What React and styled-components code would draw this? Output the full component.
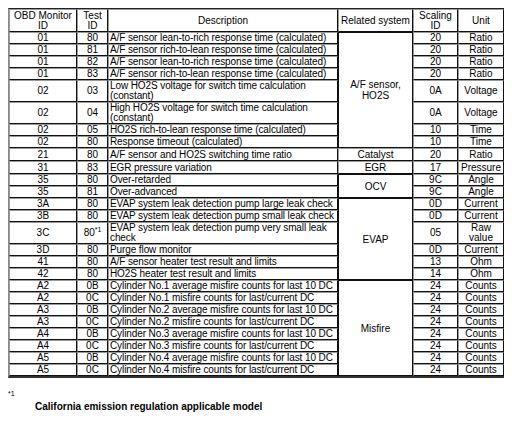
import styled, { createGlobalStyle } from 'styled-components';

const GlobalStyle = createGlobalStyle`
  body {
    margin: 8px;
    background: #fff;
    color: #000;
    font-family: 'Liberation Sans', Arial, sans-serif;
  }
`;

const rows = [
  { mon: '01', test: '80', desc: 'A/F sensor lean-to-rich response time (calculated)', sys: 'A/F sensor,\nHO2S', span: 8, scale: '20', unit: 'Ratio' },
  { mon: '01', test: '81', desc: 'A/F sensor rich-to-lean response time (calculated)', scale: '20', unit: 'Ratio' },
  { mon: '01', test: '82', desc: 'A/F sensor lean-to-rich response time (calculated)', scale: '20', unit: 'Ratio' },
  { mon: '01', test: '83', desc: 'A/F sensor rich-to-lean response time (calculated)', scale: '20', unit: 'Ratio' },
  { mon: '02', test: '03', desc: 'Low HO2S voltage for switch time calculation\n(constant)', scale: '0A', unit: 'Voltage' },
  { mon: '02', test: '04', desc: 'High HO2S voltage for switch time calculation\n(constant)', scale: '0A', unit: 'Voltage' },
  { mon: '02', test: '05', desc: 'HO2S rich-to-lean response time (calculated)', scale: '10', unit: 'Time' },
  { mon: '02', test: '80', desc: 'Response timeout (calculated)', scale: '10', unit: 'Time' },
  { mon: '21', test: '80', desc: 'A/F sensor and HO2S switching time ratio', sys: 'Catalyst', span: 1, scale: '20', unit: 'Ratio' },
  { mon: '31', test: '83', desc: 'EGR pressure variation', sys: 'EGR', span: 1, scale: '17', unit: 'Pressure' },
  { mon: '35', test: '80', desc: 'Over-retarded', sys: 'OCV', span: 2, scale: '9C', unit: 'Angle' },
  { mon: '35', test: '81', desc: 'Over-advanced', scale: '9C', unit: 'Angle' },
  { mon: '3A', test: '80', desc: 'EVAP system leak detection pump large leak check', sys: 'EVAP', span: 6, scale: '0D', unit: 'Current' },
  { mon: '3B', test: '80', desc: 'EVAP system leak detection pump small leak check', scale: '0D', unit: 'Current' },
  { mon: '3C', test: '80', note: '*1', desc: 'EVAP system leak detection pump very small leak\ncheck', scale: '05', unit: 'Raw\nvalue' },
  { mon: '3D', test: '80', desc: 'Purge flow monitor', scale: '0D', unit: 'Current' },
  { mon: '41', test: '80', desc: 'A/F sensor heater test result and limits', scale: '13', unit: 'Ohm' },
  { mon: '42', test: '80', desc: 'HO2S heater test result and limits', scale: '14', unit: 'Ohm' },
  { mon: 'A2', test: '0B', desc: 'Cylinder No.1 average misfire counts for last 10 DC', sys: 'Misfire', span: 8, scale: '24', unit: 'Counts' },
  { mon: 'A2', test: '0C', desc: 'Cylinder No.1 misfire counts for last/current DC', scale: '24', unit: 'Counts' },
  { mon: 'A3', test: '0B', desc: 'Cylinder No.2 average misfire counts for last 10 DC', scale: '24', unit: 'Counts' },
  { mon: 'A3', test: '0C', desc: 'Cylinder No.2 misfire counts for last/current DC', scale: '24', unit: 'Counts' },
  { mon: 'A4', test: '0B', desc: 'Cylinder No.3 average misfire counts for last 10 DC', scale: '24', unit: 'Counts' },
  { mon: 'A4', test: '0C', desc: 'Cylinder No.3 misfire counts for last/current DC', scale: '24', unit: 'Counts' },
  { mon: 'A5', test: '0B', desc: 'Cylinder No.4 average misfire counts for last 10 DC', scale: '24', unit: 'Counts' },
  { mon: 'A5', test: '0C', desc: 'Cylinder No.4 misfire counts for last/current DC', scale: '24', unit: 'Counts' },
];

const widths = [68, 31, 230, 75, 45, 46];

export default function App() {
  return (
    <Page>
      <GlobalStyle />
      <Table>
        <colgroup>
          {widths.map((w, i) => (
            <Col key={i} $w={w} />
          ))}
        </colgroup>
        <thead>
          <tr>
            <Head>OBD Monitor<br />ID</Head>
            <Head>Test<br />ID</Head>
            <Head>Description</Head>
            <Head>Related system</Head>
            <Head>Scaling<br />ID</Head>
            <Head>Unit</Head>
          </tr>
        </thead>
        <tbody>
          {rows.map((r, i) => (
            <tr key={i}>
              <Cell>{r.mon}</Cell>
              <Cell>
                {r.test}
                {r.note && <Sup>{r.note}</Sup>}
              </Cell>
              <Cell $left>{r.desc}</Cell>
              {r.sys && (
                <SysCell rowSpan={r.span} $group={r.span > 1}>
                  {r.sys}
                </SysCell>
              )}
              <Cell>{r.scale}</Cell>
              <Cell>{r.unit}</Cell>
            </tr>
          ))}
        </tbody>
      </Table>
      <Mark>*1</Mark>
      <Note>California emission regulation applicable model</Note>
    </Page>
  );
}

const Page = styled.div`
  width: 496px;
`;

const Table = styled.table`
  width: 496px;
  table-layout: fixed;
  border-collapse: separate;
  border-spacing: 0;
  border-style: solid;
  border-width: 1px 1px 2px 1px;
  border-color: #222 #333 #333 #8a8a8a;
  font-size: 10px;
  line-height: 10px;
`;

const Col = styled.col`
  width: ${(p) => p.$w}px;
`;

const Head = styled.th`
  font-weight: normal;
  text-align: center;
  vertical-align: middle;
  padding: 1px 1px 0;
  line-height: 10px;
  border-style: solid;
  border-width: 1px;
  border-color: #9a9a9a #111 #111 #9a9a9a;
`;

const Cell = styled.td`
  text-align: ${(p) => (p.$left ? 'left' : 'center')};
  vertical-align: middle;
  padding: 0 0 0 ${(p) => (p.$left ? '1px' : '0')};
  letter-spacing: ${(p) => (p.$left ? '-0.1px' : 'normal')};
  white-space: pre;
  overflow: hidden;
  height: 10px;
  border-style: solid;
  border-width: 1px;
  border-color: #9a9a9a #111 #111 #9a9a9a;
`;

const SysCell = styled.td`
  text-align: center;
  vertical-align: middle;
  white-space: pre;
  padding: 0 1px;
  border-style: solid;
  border-width: 1px;
  border-color: ${(p) => (p.$group ? '#111' : '#9a9a9a #111 #111 #9a9a9a')};
  line-height: 11px;
`;

const Sup = styled.span`
  font-size: 7px;
  vertical-align: 4px;
  line-height: 0;
`;

const Mark = styled.div`
  margin-top: 12px;
  font-size: 7px;
  line-height: 8px;
`;

const Note = styled.div`
  margin-top: 3px;
  padding-left: 27px;
  font-size: 10px;
  font-weight: bold;
  line-height: 12px;
`;
